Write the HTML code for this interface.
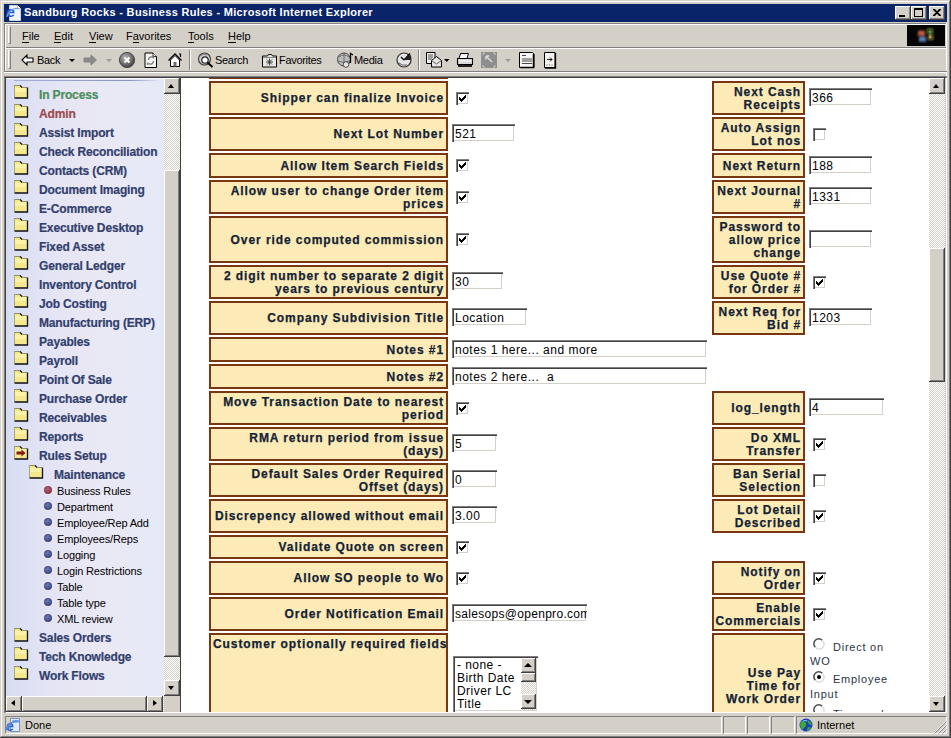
<!DOCTYPE html>
<html><head><meta charset="utf-8">
<style>
*{box-sizing:border-box}
html,body{margin:0;padding:0}
body{width:951px;height:738px;overflow:hidden;position:relative;background:#D4D0C8;font-family:"Liberation Sans",sans-serif;}
.a{position:absolute}
.btn{background:#D4D0C8;box-shadow:inset -1px -1px #404040,inset 1px 1px #fff,inset -2px -2px #808080,inset 2px 2px #D4D0C8}
.trk{background-color:#D4D0C8;background-image:repeating-conic-gradient(#fff 0 25%,#D4D0C8 0 50%);background-size:2px 2px}
.tri{width:0;height:0;position:absolute}
.menu{font-size:11px;line-height:13px;color:#000;top:30px;white-space:nowrap}
.menu u{text-decoration:none;border-bottom:1px solid #000}
.tb{font-size:11px;line-height:13px;color:#000;top:54px;letter-spacing:-0.3px;white-space:nowrap}
/* sidebar */
#side{left:6px;top:78px;width:158px;height:618px;overflow:hidden;background:linear-gradient(90deg,#d8ddf3 0%,#e1e3f5 22%,#e9e7f4 50%,#e9e9f6 75%,#e5e9f7 100%)}
.si{position:absolute;font-size:12px;line-height:13px;font-weight:bold;color:#323f6d;white-space:nowrap;letter-spacing:-0.15px;-webkit-text-stroke:0.2px}
.fold{position:absolute}
.sub{position:absolute;left:57px;font-size:11px;line-height:13px;color:#000;white-space:nowrap;letter-spacing:-0.15px}
.dot{position:absolute;left:44px;width:8px;height:8px;border-radius:50%;background:radial-gradient(circle at 45% 40%,#6c78b4,#3a4478 70%,rgba(90,100,170,0.5) 100%)}
.dot.red{background:radial-gradient(circle at 45% 40%,#b06070,#8a3444 70%,rgba(200,110,130,0.5) 100%)}
/* main */
#main{left:181px;top:78px;width:748px;height:634px;overflow:hidden;background:#fff}
.lb{position:absolute;background:#FDEBB7;border:2px solid #7A3610;font-size:12px;font-weight:bold;color:#132234;letter-spacing:0.92px;-webkit-text-stroke:0.25px #132234;text-align:right;line-height:13px;display:flex;align-items:center;justify-content:flex-end;padding-right:2px;padding-top:1px;white-space:nowrap}
.in{position:absolute;height:18px;background:#fff;box-shadow:inset 1px 1px #808080,inset 2px 2px #404040,inset -1px -1px #fff,inset -2px -2px #D4D0C8;font-size:12px;color:#000;padding-left:3px;padding-top:3px;line-height:15px;white-space:nowrap;overflow:hidden;letter-spacing:0.5px}
.cb{position:absolute;width:13px;height:13px;background:#fff;box-shadow:inset 1px 1px #808080,inset 2px 2px #404040,inset -1px -1px #fff,inset -2px -2px #D4D0C8}
.ck{position:absolute;left:3px;top:3px}
.sel{position:absolute;background:#fff;box-shadow:inset 1px 1px #808080,inset 2px 2px #404040,inset -1px -1px #fff,inset -2px -2px #D4D0C8}
.opts{position:absolute;left:4px;top:3px;font-size:12px;line-height:13px;letter-spacing:0.45px;color:#000;white-space:nowrap}
.rad{position:absolute;width:12px;height:12px}

.rt{position:absolute;font-size:11px;line-height:13px;color:#2b3444;letter-spacing:0.75px;white-space:nowrap}
</style></head><body>

<!-- window frame -->
<div class="a" style="left:0;top:0;width:951px;height:738px;box-shadow:inset -1px -1px #404040,inset 1px 1px #D4D0C8,inset -2px -2px #808080,inset 2px 2px #fff"></div>

<!-- title bar -->
<div class="a" style="left:4px;top:4px;width:943px;height:18px;background:#0A246A"></div>
<svg class="a" style="left:6px;top:5px" width="16" height="16" viewBox="0 0 16 16">
<path d="M3.5 0.5h8l3 3v12h-11z" fill="#f2f4fa" stroke="#c8d0e0" stroke-width="1"/>
<path d="M11.5 0.5v3h3" fill="#fff" stroke="#aab" stroke-width="0.8"/>
<text x="0.5" y="12" font-family="Liberation Sans" font-weight="bold" font-size="15" fill="#2558c8">e</text>
<path d="M0.5 12c2-6 8-10 12-8" stroke="#6a9af0" stroke-width="1.3" fill="none"/>
</svg>
<div class="a" style="left:24px;top:6px;font-size:11px;font-weight:bold;color:#fff;letter-spacing:0.32px;white-space:nowrap">Sandburg Rocks - Business Rules - Microsoft Internet Explorer</div>
<div class="a btn" style="left:895px;top:6px;width:16px;height:14px"><div class="a" style="left:4px;top:9px;width:6px;height:2px;background:#000"></div></div>
<div class="a btn" style="left:911px;top:6px;width:16px;height:14px"><div class="a" style="left:3px;top:2px;width:9px;height:9px;border:1px solid #000;border-top-width:2px"></div></div>
<div class="a btn" style="left:929px;top:6px;width:16px;height:14px"><svg class="a" style="left:4px;top:3px" width="8" height="7" viewBox="0 0 8 7"><path d="M0 0L7 7M7 0L0 7M1 0L8 7M8 0L1 7" stroke="#000" stroke-width="1.2"/></svg></div>

<!-- menu bar -->
<div class="a" style="left:4px;top:23px;width:943px;height:1px;background:#808080"></div>
<div class="a" style="left:4px;top:24px;width:943px;height:1px;background:#fff"></div>
<div class="a" style="left:4px;top:47px;width:943px;height:1px;background:#808080"></div>
<div class="a" style="left:4px;top:48px;width:943px;height:1px;background:#fff"></div>
<div class="a" style="left:4px;top:23px;width:1px;height:50px;background:#808080"></div>
<div class="a" style="left:5px;top:24px;width:1px;height:48px;background:#fff"></div>
<div class="a" style="left:946px;top:23px;width:1px;height:690px;background:#fff"></div>
<div class="a" style="left:4px;top:76px;width:943px;height:1px;background:#808080"></div>
<div class="a" style="left:4px;top:76px;width:1px;height:637px;background:#808080"></div>
<div class="a" style="left:8px;top:26px;width:3px;height:18px;border-left:1px solid #fff;border-top:1px solid #fff;border-right:1px solid #808080;border-bottom:1px solid #808080"></div>
<div class="a menu" style="left:22px"><u>F</u>ile</div>
<div class="a menu" style="left:54px"><u>E</u>dit</div>
<div class="a menu" style="left:89px"><u>V</u>iew</div>
<div class="a menu" style="left:126px">F<u>a</u>vorites</div>
<div class="a menu" style="left:188px"><u>T</u>ools</div>
<div class="a menu" style="left:228px"><u>H</u>elp</div>
<div class="a" style="left:907px;top:25px;width:38px;height:21px;background:#050505"></div>
<svg class="a" style="left:914px;top:26px" width="24" height="20" viewBox="0 0 24 20">
<defs><filter id="bl"><feGaussianBlur stdDeviation="0.9"/></filter></defs><g filter="url(#bl)">
<path d="M4 5q3-1.2 7 0v5q-4-1.2-7 0z" fill="#c06040"/><path d="M13 3q3-1 6 0v5q-3-1-6 0z" fill="#6a9a40"/>
<path d="M5 11q3-1.2 7 0v5q-4-1.2-7 0z" fill="#5a80b8"/><path d="M14 9q3-1 5 0v5q-2-1-5 0z" fill="#b8a850"/></g>
<path d="M14 4h4v9h-4z" fill="none" stroke="#101000" stroke-width="1" opacity="0.6"/>
</svg>

<!-- toolbar -->
<div class="a" style="left:4px;top:71px;width:943px;height:1px;background:#808080"></div>
<div class="a" style="left:4px;top:72px;width:943px;height:1px;background:#fff"></div>
<div class="a" style="left:8px;top:50px;width:3px;height:19px;border-left:1px solid #fff;border-top:1px solid #fff;border-right:1px solid #808080;border-bottom:1px solid #808080"></div>

<svg class="a" style="left:0;top:48px" width="600" height="24" viewBox="0 48 600 24">
<!-- back arrow outline -->
<path d="M22 60l5-5v3h6v4h-6v3z" fill="#fff" stroke="#000" stroke-width="1.1" stroke-linejoin="miter"/>
<!-- back dropdown -->
<path d="M69 59h6l-3 3z" fill="#000"/>
<!-- forward arrow gray -->
<path d="M84 58h7v-3l5.5 5-5.5 5v-3h-7z" fill="#8c8c8c" stroke="#7a7a7a" stroke-width="0.8"/>
<path d="M106 59h6l-3 3z" fill="#9a9a9a"/>
<!-- stop -->
<defs><radialGradient id="sg" cx="0.4" cy="0.35" r="0.7"><stop offset="0" stop-color="#b8b8b8"/><stop offset="0.6" stop-color="#6e6e6e"/><stop offset="1" stop-color="#3c3c3c"/></radialGradient></defs>
<circle cx="127" cy="60" r="7.6" fill="url(#sg)" stroke="#2e2e2e" stroke-width="0.8"/>
<path d="M124.5 57.5l5 5M129.5 57.5l-5 5" stroke="#fff" stroke-width="2"/>
<!-- refresh doc -->
<path d="M145 53h8l3.5 3.5v11h-11.5z" fill="#f4f4f0" stroke="#000" stroke-width="1"/><path d="M153 53v3.5h3.5" fill="#fff" stroke="#000" stroke-width="0.8"/>
<path d="M148.5 60a3 3 0 0 1 5-2.3M153.5 61a3 3 0 0 1-5 2.3" stroke="#7a7a7a" stroke-width="1.3" fill="none"/>
<path d="M152 56l2.5 0.5-0.8 2.5zM149 65l-2.5-0.5 0.8-2.5z" fill="#7a7a7a"/>
<!-- home -->
<path d="M168.5 60.5l6.5-6.5 6.5 6.5" stroke="#000" stroke-width="1.3" fill="none"/>
<path d="M170.5 60v6.5h9v-6.5l-4.5-4.5z" fill="#fff" stroke="#000" stroke-width="1"/>
<path d="M173.5 62h3v4.5h-3z" fill="#6a6a6a"/>
<path d="M179 54h1.5v3" stroke="#000" stroke-width="1.2" fill="none"/>
<!-- separator -->
<path d="M189.5 50v20" stroke="#808080"/><path d="M190.5 50v20" stroke="#fff"/>
<!-- search -->
<circle cx="204.5" cy="59" r="6" fill="#cfcfcf" stroke="#404040" stroke-width="1.2"/>
<circle cx="205" cy="60" r="3.2" fill="#fff" stroke="#202020" stroke-width="1.2"/>
<path d="M207.5 62.5l5 4.5" stroke="#000" stroke-width="2"/>
<path d="M200 56q3-3 7-1" stroke="#777" stroke-width="1" fill="none"/>
<!-- favorites folder -->
<path d="M262.5 56h5l1-1.5h3l1 1.5h4v11h-14z" fill="#e8e8e4" stroke="#000" stroke-width="1"/>
<path d="M263 57.5h13" stroke="#888"/>
<path d="M269.5 58.5v7M266 62h7M267 59.5l5 5M272 59.5l-5 5" stroke="#333" stroke-width="0.9"/>
<!-- media globe -->
<circle cx="344" cy="59.5" r="6.5" fill="#bdbdbd" stroke="#404040" stroke-width="1"/>
<path d="M339 57q5-4 10 0M338 61q6 3 12 0M344 53v13" stroke="#666" stroke-width="0.9" fill="none"/>
<circle cx="346" cy="64.5" r="2.8" fill="#e6e6e6" stroke="#333" stroke-width="0.8"/>
<path d="M350.5 63v-9.5l2.5 1.5" stroke="#000" stroke-width="1.3" fill="none"/>
<!-- history -->
<circle cx="404" cy="60" r="7" fill="#e6e6e6" stroke="#303030" stroke-width="1.2"/>
<path d="M404 60l6-6.5M404 60l-3-3" stroke="#000" stroke-width="1.4"/>
<path d="M404 60L410 54A7 7 0 0 1 411 60z" fill="#202020"/>
<path d="M399 63q3 3 8 2" stroke="#666" stroke-width="1" fill="none"/>
<!-- separator -->
<path d="M418.5 50v20" stroke="#808080"/><path d="M419.5 50v20" stroke="#fff"/>
<!-- mail -->
<path d="M426.5 52.5h8.5v11h-8.5z" fill="#f4f4f2" stroke="#000" stroke-width="1"/>
<path d="M428 55h5M428 57h5M428 59h4" stroke="#333" stroke-width="0.9"/>
<path d="M431.5 60.5l5-4 5 4v6.5h-10z" fill="#e8e8e6" stroke="#000" stroke-width="1"/>
<path d="M431.5 60.5l5 3.5 5-3.5" stroke="#555" fill="none" stroke-width="0.9"/>
<path d="M444 59h5.5l-2.75 3z" fill="#000"/>
<!-- print -->
<path d="M460.5 53.5h8l-1.5 5h-8z" fill="#fafafa" stroke="#000" stroke-width="1"/>
<path d="M457.5 58.5h15v6h-15z" fill="#d8d8d8" stroke="#000" stroke-width="1.1"/>
<path d="M458 65h14v2h-14z" fill="#222"/>
<path d="M459 61h12" stroke="#fff" stroke-width="1"/>
<!-- edit disabled gray box -->
<rect x="481" y="52" width="16" height="16" fill="#8e8e8e"/>
<path d="M486 56l6 6M486 56v3.5M486 56h3.5" stroke="#d8d8d8" stroke-width="1.6" fill="none"/>
<path d="M483 55v-2h2M495 55v-2h-2M483 65v2h2M495 65v2h-2" stroke="#c8c8c8" stroke-width="1" fill="none"/>
<path d="M505 59h6l-3 3z" fill="#9a9a9a"/>
<!-- discuss doc -->
<path d="M519.5 52.5h13l1.5 1.5v13.5h-14.5z" fill="#f6f6f4" stroke="#000" stroke-width="1"/>
<path d="M533.5 54v13.5h-13" stroke="#000" stroke-width="1.5" fill="none"/>
<path d="M522 55.5h4M522 59h10M522 61h10M522 63.5h10" stroke="#333" stroke-width="0.9"/>
<!-- messenger doc -->
<path d="M544.5 52.5h10.5v15h-10.5z" fill="#f2f2f0" stroke="#000" stroke-width="1"/>
<path d="M555.5 53v15h-10.5" stroke="#000" stroke-width="1.3" fill="none"/>
<path d="M547 59.5h5M550 57.5l2 2-2 2" stroke="#000" stroke-width="0.9" fill="none"/>
<path d="M546.5 65h1M549 65h1M551.5 65h1" stroke="#555"/>
</svg>
<div class="a tb" style="left:37px">Back</div>
<div class="a tb" style="left:215px">Search</div>
<div class="a tb" style="left:279px">Favorites</div>
<div class="a tb" style="left:354px">Media</div>

<!-- frames border -->
<div class="a" style="left:5px;top:77px;width:942px;height:636px;border-top:1px solid #404040;border-left:1px solid #404040;border-right:1px solid #fff;border-bottom:1px solid #fff"></div>

<!-- sidebar -->
<div class="a" id="side"></div>
<div class="a" style="left:0;top:0;width:164px;height:696px;overflow:hidden;clip-path:inset(78px 0 0 6px)">
<div class="a" style="left:6px;top:78px;width:158px;height:1px;background:#f4f6fc"></div>
<div class="a" style="left:14px;top:80px;width:143px;height:1px;background:linear-gradient(90deg,#a8b2d8,#8a93b8 80%,#d8dcf0)"></div>
<svg class="fold" style="left:13px;top:85px" width="16" height="14" viewBox="0 0 16 14"><path d="M1 0.5h6.5l2 2h5v10h-13.5z" fill="#F4E88C"/><path d="M2 3h11v4h-11z" fill="#FAF2A6"/><path d="M1 0.5h6.5" stroke="#8f8f6a" stroke-width="1"/><path d="M1.5 0.5v12" stroke="#a8a878" stroke-width="1"/><path d="M7 0.5l2 2h0.5" stroke="#111" stroke-width="1.2" fill="none"/><path d="M9 2.5h5" stroke="#8f8f6a" stroke-width="1"/><path d="M14.5 2.5v10.5h-13" stroke="#111" stroke-width="1.3" fill="none"/></svg>
<div class="si" style="left:39px;top:89px;color:#4b8d5b">In Process</div>
<svg class="fold" style="left:13px;top:104px" width="16" height="14" viewBox="0 0 16 14"><path d="M1 0.5h6.5l2 2h5v10h-13.5z" fill="#F4E88C"/><path d="M2 3h11v4h-11z" fill="#FAF2A6"/><path d="M1 0.5h6.5" stroke="#8f8f6a" stroke-width="1"/><path d="M1.5 0.5v12" stroke="#a8a878" stroke-width="1"/><path d="M7 0.5l2 2h0.5" stroke="#111" stroke-width="1.2" fill="none"/><path d="M9 2.5h5" stroke="#8f8f6a" stroke-width="1"/><path d="M14.5 2.5v10.5h-13" stroke="#111" stroke-width="1.3" fill="none"/></svg>
<div class="si" style="left:39px;top:108px;color:#9b4a4f">Admin</div>
<svg class="fold" style="left:13px;top:123px" width="16" height="14" viewBox="0 0 16 14"><path d="M1 0.5h6.5l2 2h5v10h-13.5z" fill="#F4E88C"/><path d="M2 3h11v4h-11z" fill="#FAF2A6"/><path d="M1 0.5h6.5" stroke="#8f8f6a" stroke-width="1"/><path d="M1.5 0.5v12" stroke="#a8a878" stroke-width="1"/><path d="M7 0.5l2 2h0.5" stroke="#111" stroke-width="1.2" fill="none"/><path d="M9 2.5h5" stroke="#8f8f6a" stroke-width="1"/><path d="M14.5 2.5v10.5h-13" stroke="#111" stroke-width="1.3" fill="none"/></svg>
<div class="si" style="left:39px;top:127px">Assist Import</div>
<svg class="fold" style="left:13px;top:142px" width="16" height="14" viewBox="0 0 16 14"><path d="M1 0.5h6.5l2 2h5v10h-13.5z" fill="#F4E88C"/><path d="M2 3h11v4h-11z" fill="#FAF2A6"/><path d="M1 0.5h6.5" stroke="#8f8f6a" stroke-width="1"/><path d="M1.5 0.5v12" stroke="#a8a878" stroke-width="1"/><path d="M7 0.5l2 2h0.5" stroke="#111" stroke-width="1.2" fill="none"/><path d="M9 2.5h5" stroke="#8f8f6a" stroke-width="1"/><path d="M14.5 2.5v10.5h-13" stroke="#111" stroke-width="1.3" fill="none"/></svg>
<div class="si" style="left:39px;top:146px">Check Reconciliation</div>
<svg class="fold" style="left:13px;top:161px" width="16" height="14" viewBox="0 0 16 14"><path d="M1 0.5h6.5l2 2h5v10h-13.5z" fill="#F4E88C"/><path d="M2 3h11v4h-11z" fill="#FAF2A6"/><path d="M1 0.5h6.5" stroke="#8f8f6a" stroke-width="1"/><path d="M1.5 0.5v12" stroke="#a8a878" stroke-width="1"/><path d="M7 0.5l2 2h0.5" stroke="#111" stroke-width="1.2" fill="none"/><path d="M9 2.5h5" stroke="#8f8f6a" stroke-width="1"/><path d="M14.5 2.5v10.5h-13" stroke="#111" stroke-width="1.3" fill="none"/></svg>
<div class="si" style="left:39px;top:165px">Contacts (CRM)</div>
<svg class="fold" style="left:13px;top:180px" width="16" height="14" viewBox="0 0 16 14"><path d="M1 0.5h6.5l2 2h5v10h-13.5z" fill="#F4E88C"/><path d="M2 3h11v4h-11z" fill="#FAF2A6"/><path d="M1 0.5h6.5" stroke="#8f8f6a" stroke-width="1"/><path d="M1.5 0.5v12" stroke="#a8a878" stroke-width="1"/><path d="M7 0.5l2 2h0.5" stroke="#111" stroke-width="1.2" fill="none"/><path d="M9 2.5h5" stroke="#8f8f6a" stroke-width="1"/><path d="M14.5 2.5v10.5h-13" stroke="#111" stroke-width="1.3" fill="none"/></svg>
<div class="si" style="left:39px;top:184px">Document Imaging</div>
<svg class="fold" style="left:13px;top:199px" width="16" height="14" viewBox="0 0 16 14"><path d="M1 0.5h6.5l2 2h5v10h-13.5z" fill="#F4E88C"/><path d="M2 3h11v4h-11z" fill="#FAF2A6"/><path d="M1 0.5h6.5" stroke="#8f8f6a" stroke-width="1"/><path d="M1.5 0.5v12" stroke="#a8a878" stroke-width="1"/><path d="M7 0.5l2 2h0.5" stroke="#111" stroke-width="1.2" fill="none"/><path d="M9 2.5h5" stroke="#8f8f6a" stroke-width="1"/><path d="M14.5 2.5v10.5h-13" stroke="#111" stroke-width="1.3" fill="none"/></svg>
<div class="si" style="left:39px;top:203px">E-Commerce</div>
<svg class="fold" style="left:13px;top:218px" width="16" height="14" viewBox="0 0 16 14"><path d="M1 0.5h6.5l2 2h5v10h-13.5z" fill="#F4E88C"/><path d="M2 3h11v4h-11z" fill="#FAF2A6"/><path d="M1 0.5h6.5" stroke="#8f8f6a" stroke-width="1"/><path d="M1.5 0.5v12" stroke="#a8a878" stroke-width="1"/><path d="M7 0.5l2 2h0.5" stroke="#111" stroke-width="1.2" fill="none"/><path d="M9 2.5h5" stroke="#8f8f6a" stroke-width="1"/><path d="M14.5 2.5v10.5h-13" stroke="#111" stroke-width="1.3" fill="none"/></svg>
<div class="si" style="left:39px;top:222px">Executive Desktop</div>
<svg class="fold" style="left:13px;top:237px" width="16" height="14" viewBox="0 0 16 14"><path d="M1 0.5h6.5l2 2h5v10h-13.5z" fill="#F4E88C"/><path d="M2 3h11v4h-11z" fill="#FAF2A6"/><path d="M1 0.5h6.5" stroke="#8f8f6a" stroke-width="1"/><path d="M1.5 0.5v12" stroke="#a8a878" stroke-width="1"/><path d="M7 0.5l2 2h0.5" stroke="#111" stroke-width="1.2" fill="none"/><path d="M9 2.5h5" stroke="#8f8f6a" stroke-width="1"/><path d="M14.5 2.5v10.5h-13" stroke="#111" stroke-width="1.3" fill="none"/></svg>
<div class="si" style="left:39px;top:241px">Fixed Asset</div>
<svg class="fold" style="left:13px;top:256px" width="16" height="14" viewBox="0 0 16 14"><path d="M1 0.5h6.5l2 2h5v10h-13.5z" fill="#F4E88C"/><path d="M2 3h11v4h-11z" fill="#FAF2A6"/><path d="M1 0.5h6.5" stroke="#8f8f6a" stroke-width="1"/><path d="M1.5 0.5v12" stroke="#a8a878" stroke-width="1"/><path d="M7 0.5l2 2h0.5" stroke="#111" stroke-width="1.2" fill="none"/><path d="M9 2.5h5" stroke="#8f8f6a" stroke-width="1"/><path d="M14.5 2.5v10.5h-13" stroke="#111" stroke-width="1.3" fill="none"/></svg>
<div class="si" style="left:39px;top:260px">General Ledger</div>
<svg class="fold" style="left:13px;top:275px" width="16" height="14" viewBox="0 0 16 14"><path d="M1 0.5h6.5l2 2h5v10h-13.5z" fill="#F4E88C"/><path d="M2 3h11v4h-11z" fill="#FAF2A6"/><path d="M1 0.5h6.5" stroke="#8f8f6a" stroke-width="1"/><path d="M1.5 0.5v12" stroke="#a8a878" stroke-width="1"/><path d="M7 0.5l2 2h0.5" stroke="#111" stroke-width="1.2" fill="none"/><path d="M9 2.5h5" stroke="#8f8f6a" stroke-width="1"/><path d="M14.5 2.5v10.5h-13" stroke="#111" stroke-width="1.3" fill="none"/></svg>
<div class="si" style="left:39px;top:279px">Inventory Control</div>
<svg class="fold" style="left:13px;top:294px" width="16" height="14" viewBox="0 0 16 14"><path d="M1 0.5h6.5l2 2h5v10h-13.5z" fill="#F4E88C"/><path d="M2 3h11v4h-11z" fill="#FAF2A6"/><path d="M1 0.5h6.5" stroke="#8f8f6a" stroke-width="1"/><path d="M1.5 0.5v12" stroke="#a8a878" stroke-width="1"/><path d="M7 0.5l2 2h0.5" stroke="#111" stroke-width="1.2" fill="none"/><path d="M9 2.5h5" stroke="#8f8f6a" stroke-width="1"/><path d="M14.5 2.5v10.5h-13" stroke="#111" stroke-width="1.3" fill="none"/></svg>
<div class="si" style="left:39px;top:298px">Job Costing</div>
<svg class="fold" style="left:13px;top:313px" width="16" height="14" viewBox="0 0 16 14"><path d="M1 0.5h6.5l2 2h5v10h-13.5z" fill="#F4E88C"/><path d="M2 3h11v4h-11z" fill="#FAF2A6"/><path d="M1 0.5h6.5" stroke="#8f8f6a" stroke-width="1"/><path d="M1.5 0.5v12" stroke="#a8a878" stroke-width="1"/><path d="M7 0.5l2 2h0.5" stroke="#111" stroke-width="1.2" fill="none"/><path d="M9 2.5h5" stroke="#8f8f6a" stroke-width="1"/><path d="M14.5 2.5v10.5h-13" stroke="#111" stroke-width="1.3" fill="none"/></svg>
<div class="si" style="left:39px;top:317px">Manufacturing (ERP)</div>
<svg class="fold" style="left:13px;top:332px" width="16" height="14" viewBox="0 0 16 14"><path d="M1 0.5h6.5l2 2h5v10h-13.5z" fill="#F4E88C"/><path d="M2 3h11v4h-11z" fill="#FAF2A6"/><path d="M1 0.5h6.5" stroke="#8f8f6a" stroke-width="1"/><path d="M1.5 0.5v12" stroke="#a8a878" stroke-width="1"/><path d="M7 0.5l2 2h0.5" stroke="#111" stroke-width="1.2" fill="none"/><path d="M9 2.5h5" stroke="#8f8f6a" stroke-width="1"/><path d="M14.5 2.5v10.5h-13" stroke="#111" stroke-width="1.3" fill="none"/></svg>
<div class="si" style="left:39px;top:336px">Payables</div>
<svg class="fold" style="left:13px;top:351px" width="16" height="14" viewBox="0 0 16 14"><path d="M1 0.5h6.5l2 2h5v10h-13.5z" fill="#F4E88C"/><path d="M2 3h11v4h-11z" fill="#FAF2A6"/><path d="M1 0.5h6.5" stroke="#8f8f6a" stroke-width="1"/><path d="M1.5 0.5v12" stroke="#a8a878" stroke-width="1"/><path d="M7 0.5l2 2h0.5" stroke="#111" stroke-width="1.2" fill="none"/><path d="M9 2.5h5" stroke="#8f8f6a" stroke-width="1"/><path d="M14.5 2.5v10.5h-13" stroke="#111" stroke-width="1.3" fill="none"/></svg>
<div class="si" style="left:39px;top:355px">Payroll</div>
<svg class="fold" style="left:13px;top:370px" width="16" height="14" viewBox="0 0 16 14"><path d="M1 0.5h6.5l2 2h5v10h-13.5z" fill="#F4E88C"/><path d="M2 3h11v4h-11z" fill="#FAF2A6"/><path d="M1 0.5h6.5" stroke="#8f8f6a" stroke-width="1"/><path d="M1.5 0.5v12" stroke="#a8a878" stroke-width="1"/><path d="M7 0.5l2 2h0.5" stroke="#111" stroke-width="1.2" fill="none"/><path d="M9 2.5h5" stroke="#8f8f6a" stroke-width="1"/><path d="M14.5 2.5v10.5h-13" stroke="#111" stroke-width="1.3" fill="none"/></svg>
<div class="si" style="left:39px;top:374px">Point Of Sale</div>
<svg class="fold" style="left:13px;top:389px" width="16" height="14" viewBox="0 0 16 14"><path d="M1 0.5h6.5l2 2h5v10h-13.5z" fill="#F4E88C"/><path d="M2 3h11v4h-11z" fill="#FAF2A6"/><path d="M1 0.5h6.5" stroke="#8f8f6a" stroke-width="1"/><path d="M1.5 0.5v12" stroke="#a8a878" stroke-width="1"/><path d="M7 0.5l2 2h0.5" stroke="#111" stroke-width="1.2" fill="none"/><path d="M9 2.5h5" stroke="#8f8f6a" stroke-width="1"/><path d="M14.5 2.5v10.5h-13" stroke="#111" stroke-width="1.3" fill="none"/></svg>
<div class="si" style="left:39px;top:393px">Purchase Order</div>
<svg class="fold" style="left:13px;top:408px" width="16" height="14" viewBox="0 0 16 14"><path d="M1 0.5h6.5l2 2h5v10h-13.5z" fill="#F4E88C"/><path d="M2 3h11v4h-11z" fill="#FAF2A6"/><path d="M1 0.5h6.5" stroke="#8f8f6a" stroke-width="1"/><path d="M1.5 0.5v12" stroke="#a8a878" stroke-width="1"/><path d="M7 0.5l2 2h0.5" stroke="#111" stroke-width="1.2" fill="none"/><path d="M9 2.5h5" stroke="#8f8f6a" stroke-width="1"/><path d="M14.5 2.5v10.5h-13" stroke="#111" stroke-width="1.3" fill="none"/></svg>
<div class="si" style="left:39px;top:412px">Receivables</div>
<svg class="fold" style="left:13px;top:427px" width="16" height="14" viewBox="0 0 16 14"><path d="M1 0.5h6.5l2 2h5v10h-13.5z" fill="#F4E88C"/><path d="M2 3h11v4h-11z" fill="#FAF2A6"/><path d="M1 0.5h6.5" stroke="#8f8f6a" stroke-width="1"/><path d="M1.5 0.5v12" stroke="#a8a878" stroke-width="1"/><path d="M7 0.5l2 2h0.5" stroke="#111" stroke-width="1.2" fill="none"/><path d="M9 2.5h5" stroke="#8f8f6a" stroke-width="1"/><path d="M14.5 2.5v10.5h-13" stroke="#111" stroke-width="1.3" fill="none"/></svg>
<div class="si" style="left:39px;top:431px">Reports</div>
<svg class="fold" style="left:13px;top:446px" width="16" height="14" viewBox="0 0 16 14"><path d="M1 0.5h6.5l2 2h5v10h-13.5z" fill="#F4E88C"/><path d="M2 3h11v4h-11z" fill="#FAF2A6"/><path d="M1 0.5h6.5" stroke="#8f8f6a" stroke-width="1"/><path d="M1.5 0.5v12" stroke="#a8a878" stroke-width="1"/><path d="M7 0.5l2 2h0.5" stroke="#111" stroke-width="1.2" fill="none"/><path d="M9 2.5h5" stroke="#8f8f6a" stroke-width="1"/><path d="M14.5 2.5v10.5h-13" stroke="#111" stroke-width="1.3" fill="none"/><path d="M3.5 5.5h5v-2l4 3.5-4 3.5v-2h-5z" fill="#8B1A10"/></svg>
<div class="si" style="left:39px;top:450px">Rules Setup</div>
<svg class="fold" style="left:28px;top:465px" width="16" height="14" viewBox="0 0 16 14"><path d="M1 0.5h6.5l2 2h5v10h-13.5z" fill="#F4E88C"/><path d="M2 3h11v4h-11z" fill="#FAF2A6"/><path d="M1 0.5h6.5" stroke="#8f8f6a" stroke-width="1"/><path d="M1.5 0.5v12" stroke="#a8a878" stroke-width="1"/><path d="M7 0.5l2 2h0.5" stroke="#111" stroke-width="1.2" fill="none"/><path d="M9 2.5h5" stroke="#8f8f6a" stroke-width="1"/><path d="M14.5 2.5v10.5h-13" stroke="#111" stroke-width="1.3" fill="none"/></svg>
<div class="si" style="left:54px;top:469px">Maintenance</div>
<div class="dot red" style="top:486px"></div>
<div class="sub" style="top:485px">Business Rules</div>
<div class="dot " style="top:502px"></div>
<div class="sub" style="top:501px">Department</div>
<div class="dot " style="top:518px"></div>
<div class="sub" style="top:517px">Employee/Rep Add</div>
<div class="dot " style="top:534px"></div>
<div class="sub" style="top:533px">Employees/Reps</div>
<div class="dot " style="top:550px"></div>
<div class="sub" style="top:549px">Logging</div>
<div class="dot " style="top:566px"></div>
<div class="sub" style="top:565px">Login Restrictions</div>
<div class="dot " style="top:582px"></div>
<div class="sub" style="top:581px">Table</div>
<div class="dot " style="top:598px"></div>
<div class="sub" style="top:597px">Table type</div>
<div class="dot " style="top:614px"></div>
<div class="sub" style="top:613px">XML review</div>
<svg class="fold" style="left:13px;top:628px" width="16" height="14" viewBox="0 0 16 14"><path d="M1 0.5h6.5l2 2h5v10h-13.5z" fill="#F4E88C"/><path d="M2 3h11v4h-11z" fill="#FAF2A6"/><path d="M1 0.5h6.5" stroke="#8f8f6a" stroke-width="1"/><path d="M1.5 0.5v12" stroke="#a8a878" stroke-width="1"/><path d="M7 0.5l2 2h0.5" stroke="#111" stroke-width="1.2" fill="none"/><path d="M9 2.5h5" stroke="#8f8f6a" stroke-width="1"/><path d="M14.5 2.5v10.5h-13" stroke="#111" stroke-width="1.3" fill="none"/></svg>
<div class="si" style="left:39px;top:632px">Sales Orders</div>
<svg class="fold" style="left:13px;top:647px" width="16" height="14" viewBox="0 0 16 14"><path d="M1 0.5h6.5l2 2h5v10h-13.5z" fill="#F4E88C"/><path d="M2 3h11v4h-11z" fill="#FAF2A6"/><path d="M1 0.5h6.5" stroke="#8f8f6a" stroke-width="1"/><path d="M1.5 0.5v12" stroke="#a8a878" stroke-width="1"/><path d="M7 0.5l2 2h0.5" stroke="#111" stroke-width="1.2" fill="none"/><path d="M9 2.5h5" stroke="#8f8f6a" stroke-width="1"/><path d="M14.5 2.5v10.5h-13" stroke="#111" stroke-width="1.3" fill="none"/></svg>
<div class="si" style="left:39px;top:651px">Tech Knowledge</div>
<svg class="fold" style="left:13px;top:666px" width="16" height="14" viewBox="0 0 16 14"><path d="M1 0.5h6.5l2 2h5v10h-13.5z" fill="#F4E88C"/><path d="M2 3h11v4h-11z" fill="#FAF2A6"/><path d="M1 0.5h6.5" stroke="#8f8f6a" stroke-width="1"/><path d="M1.5 0.5v12" stroke="#a8a878" stroke-width="1"/><path d="M7 0.5l2 2h0.5" stroke="#111" stroke-width="1.2" fill="none"/><path d="M9 2.5h5" stroke="#8f8f6a" stroke-width="1"/><path d="M14.5 2.5v10.5h-13" stroke="#111" stroke-width="1.3" fill="none"/></svg>
<div class="si" style="left:39px;top:670px">Work Flows</div>

</div>
<!-- left frame scrollbars -->
<div class="a trk" style="left:164px;top:78px;width:16px;height:618px"></div>
<div class="a btn" style="left:164px;top:78px;width:16px;height:16px"><div class="tri" style="left:4px;top:6px;border-left:3.5px solid transparent;border-right:3.5px solid transparent;border-bottom:4px solid #000"></div></div>
<div class="a btn" style="left:164px;top:170px;width:16px;height:487px"></div>
<div class="a btn" style="left:164px;top:680px;width:16px;height:16px"><div class="tri" style="left:4px;top:6px;border-left:3.5px solid transparent;border-right:3.5px solid transparent;border-top:4px solid #000"></div></div>
<div class="a trk" style="left:6px;top:696px;width:158px;height:16px"></div>
<div class="a btn" style="left:6px;top:696px;width:16px;height:16px"><div class="tri" style="left:5px;top:4px;border-top:3.5px solid transparent;border-bottom:3.5px solid transparent;border-right:4px solid #000"></div></div>
<div class="a btn" style="left:22px;top:696px;width:125px;height:16px"></div>
<div class="a btn" style="left:147px;top:696px;width:16px;height:16px"><div class="tri" style="left:6px;top:4px;border-top:3.5px solid transparent;border-bottom:3.5px solid transparent;border-left:4px solid #000"></div></div>
<div class="a" style="left:164px;top:696px;width:16px;height:16px;background:#D4D0C8"></div>
<div class="a" style="left:180px;top:78px;width:1px;height:634px;background:#404040"></div>

<!-- main frame -->
<div class="a" id="main"></div>
<div class="a" style="left:0;top:0;width:929px;height:712px;overflow:hidden;clip-path:inset(78px 0 0 181px)">
<div class="lb" style="left:209px;top:44px;width:239px;height:35px"></div>
<div class="lb" style="left:209px;top:81px;width:239px;height:34px"><span>Shipper can finalize Invoice</span></div>
<div class="cb" style="left:456px;top:92px"><svg class="ck" width="7" height="7" viewBox="0 0 7 7"><path d="M6 0h1v3h-1zM5 1h1v3h-1zM4 2h1v3h-1zM3 3h1v3h-1zM2 4h1v3h-1zM1 3h1v3h-1zM0 2h1v3h-1z" fill="#000"/></svg></div>
<div class="lb" style="left:712px;top:81px;width:93px;height:34px"><span>Next Cash<br>Receipts</span></div>
<div class="in" style="left:809px;top:88px;width:63px">366</div>
<div class="lb" style="left:209px;top:117px;width:239px;height:34px"><span>Next Lot Number</span></div>
<div class="in" style="left:452px;top:124px;width:63px">521</div>
<div class="lb" style="left:712px;top:117px;width:93px;height:34px"><span>Auto Assign<br>Lot nos</span></div>
<div class="cb" style="left:813px;top:128px"></div>
<div class="lb" style="left:209px;top:153px;width:239px;height:25px"><span>Allow Item Search Fields</span></div>
<div class="cb" style="left:456px;top:159px"><svg class="ck" width="7" height="7" viewBox="0 0 7 7"><path d="M6 0h1v3h-1zM5 1h1v3h-1zM4 2h1v3h-1zM3 3h1v3h-1zM2 4h1v3h-1zM1 3h1v3h-1zM0 2h1v3h-1z" fill="#000"/></svg></div>
<div class="lb" style="left:712px;top:153px;width:93px;height:25px"><span>Next Return</span></div>
<div class="in" style="left:809px;top:156px;width:63px">188</div>
<div class="lb" style="left:209px;top:180px;width:239px;height:34px"><span>Allow user to change Order item<br>prices</span></div>
<div class="cb" style="left:456px;top:191px"><svg class="ck" width="7" height="7" viewBox="0 0 7 7"><path d="M6 0h1v3h-1zM5 1h1v3h-1zM4 2h1v3h-1zM3 3h1v3h-1zM2 4h1v3h-1zM1 3h1v3h-1zM0 2h1v3h-1z" fill="#000"/></svg></div>
<div class="lb" style="left:712px;top:180px;width:93px;height:34px"><span>Next Journal<br>#</span></div>
<div class="in" style="left:809px;top:187px;width:63px">1331</div>
<div class="lb" style="left:209px;top:216px;width:239px;height:47px"><span>Over ride computed commission</span></div>
<div class="cb" style="left:456px;top:233px"><svg class="ck" width="7" height="7" viewBox="0 0 7 7"><path d="M6 0h1v3h-1zM5 1h1v3h-1zM4 2h1v3h-1zM3 3h1v3h-1zM2 4h1v3h-1zM1 3h1v3h-1zM0 2h1v3h-1z" fill="#000"/></svg></div>
<div class="lb" style="left:712px;top:216px;width:93px;height:47px"><span>Password to<br>allow price<br>change</span></div>
<div class="in" style="left:809px;top:230px;width:63px"></div>
<div class="lb" style="left:209px;top:265px;width:239px;height:34px"><span>2 digit number to separate 2 digit<br>years to previous century</span></div>
<div class="in" style="left:452px;top:272px;width:51px">30</div>
<div class="lb" style="left:712px;top:265px;width:93px;height:34px"><span>Use Quote #<br>for Order #</span></div>
<div class="cb" style="left:813px;top:276px"><svg class="ck" width="7" height="7" viewBox="0 0 7 7"><path d="M6 0h1v3h-1zM5 1h1v3h-1zM4 2h1v3h-1zM3 3h1v3h-1zM2 4h1v3h-1zM1 3h1v3h-1zM0 2h1v3h-1z" fill="#000"/></svg></div>
<div class="lb" style="left:209px;top:301px;width:239px;height:34px"><span>Company Subdivision Title</span></div>
<div class="in" style="left:452px;top:308px;width:75px">Location</div>
<div class="lb" style="left:712px;top:301px;width:93px;height:34px"><span>Next Req for<br>Bid #</span></div>
<div class="in" style="left:809px;top:308px;width:63px">1203</div>
<div class="lb" style="left:209px;top:337px;width:239px;height:25px"><span>Notes #1</span></div>
<div class="in" style="left:452px;top:340px;width:255px">notes 1 here... and more</div>
<div class="lb" style="left:209px;top:364px;width:239px;height:25px"><span>Notes #2</span></div>
<div class="in" style="left:452px;top:367px;width:255px">notes 2 here...&nbsp; a</div>
<div class="lb" style="left:209px;top:391px;width:239px;height:34px"><span>Move Transaction Date to nearest<br>period</span></div>
<div class="cb" style="left:456px;top:402px"><svg class="ck" width="7" height="7" viewBox="0 0 7 7"><path d="M6 0h1v3h-1zM5 1h1v3h-1zM4 2h1v3h-1zM3 3h1v3h-1zM2 4h1v3h-1zM1 3h1v3h-1zM0 2h1v3h-1z" fill="#000"/></svg></div>
<div class="lb" style="left:712px;top:391px;width:93px;height:34px"><span>log_length</span></div>
<div class="in" style="left:809px;top:398px;width:75px">4</div>
<div class="lb" style="left:209px;top:427px;width:239px;height:34px"><span>RMA return period from issue<br>(days)</span></div>
<div class="in" style="left:452px;top:434px;width:45px">5</div>
<div class="lb" style="left:712px;top:427px;width:93px;height:34px"><span>Do XML<br>Transfer</span></div>
<div class="cb" style="left:813px;top:438px"><svg class="ck" width="7" height="7" viewBox="0 0 7 7"><path d="M6 0h1v3h-1zM5 1h1v3h-1zM4 2h1v3h-1zM3 3h1v3h-1zM2 4h1v3h-1zM1 3h1v3h-1zM0 2h1v3h-1z" fill="#000"/></svg></div>
<div class="lb" style="left:209px;top:463px;width:239px;height:34px"><span>Default Sales Order Required<br>Offset (days)</span></div>
<div class="in" style="left:452px;top:470px;width:45px">0</div>
<div class="lb" style="left:712px;top:463px;width:93px;height:34px"><span>Ban Serial<br>Selection</span></div>
<div class="cb" style="left:813px;top:474px"></div>
<div class="lb" style="left:209px;top:499px;width:239px;height:34px"><span>Discrepency allowed without email</span></div>
<div class="in" style="left:452px;top:506px;width:45px">3.00</div>
<div class="lb" style="left:712px;top:499px;width:93px;height:34px"><span>Lot Detail<br>Described</span></div>
<div class="cb" style="left:813px;top:510px"><svg class="ck" width="7" height="7" viewBox="0 0 7 7"><path d="M6 0h1v3h-1zM5 1h1v3h-1zM4 2h1v3h-1zM3 3h1v3h-1zM2 4h1v3h-1zM1 3h1v3h-1zM0 2h1v3h-1z" fill="#000"/></svg></div>
<div class="lb" style="left:209px;top:535px;width:239px;height:24px"><span>Validate Quote on screen</span></div>
<div class="cb" style="left:456px;top:541px"><svg class="ck" width="7" height="7" viewBox="0 0 7 7"><path d="M6 0h1v3h-1zM5 1h1v3h-1zM4 2h1v3h-1zM3 3h1v3h-1zM2 4h1v3h-1zM1 3h1v3h-1zM0 2h1v3h-1z" fill="#000"/></svg></div>
<div class="lb" style="left:209px;top:561px;width:239px;height:34px"><span>Allow SO people to Wo</span></div>
<div class="cb" style="left:456px;top:572px"><svg class="ck" width="7" height="7" viewBox="0 0 7 7"><path d="M6 0h1v3h-1zM5 1h1v3h-1zM4 2h1v3h-1zM3 3h1v3h-1zM2 4h1v3h-1zM1 3h1v3h-1zM0 2h1v3h-1z" fill="#000"/></svg></div>
<div class="lb" style="left:712px;top:561px;width:93px;height:34px"><span>Notify on<br>Order</span></div>
<div class="cb" style="left:813px;top:572px"><svg class="ck" width="7" height="7" viewBox="0 0 7 7"><path d="M6 0h1v3h-1zM5 1h1v3h-1zM4 2h1v3h-1zM3 3h1v3h-1zM2 4h1v3h-1zM1 3h1v3h-1zM0 2h1v3h-1z" fill="#000"/></svg></div>
<div class="lb" style="left:209px;top:597px;width:239px;height:34px"><span>Order Notification Email</span></div>
<div class="in" style="left:452px;top:604px;width:135px"><span style="letter-spacing:0.3px">salesops@openpro.com</span></div>
<div class="lb" style="left:712px;top:597px;width:93px;height:34px"><span>Enable<br>Commercials</span></div>
<div class="cb" style="left:813px;top:608px"><svg class="ck" width="7" height="7" viewBox="0 0 7 7"><path d="M6 0h1v3h-1zM5 1h1v3h-1zM4 2h1v3h-1zM3 3h1v3h-1zM2 4h1v3h-1zM1 3h1v3h-1zM0 2h1v3h-1z" fill="#000"/></svg></div>
<div class="lb" style="left:209px;top:633px;width:239px;height:105px;align-items:flex-start;justify-content:flex-start;padding:3px 0 0 2px;text-align:left"><span>Customer optionally required fields</span></div>
<div class="sel" style="left:453px;top:656px;width:85px;height:56px"><div class="opts">- none -<br>Birth Date<br>Driver LC<br>Title</div><div class="trk" style="position:absolute;left:68px;top:2px;width:15px;height:52px"></div><div class="btn" style="position:absolute;left:68px;top:2px;width:15px;height:15px"><div class="tri" style="left:3px;top:5px;border-left:4px solid transparent;border-right:4px solid transparent;border-bottom:4px solid #000"></div></div><div class="btn" style="position:absolute;left:68px;top:17px;width:15px;height:9px"></div><div class="btn" style="position:absolute;left:68px;top:38px;width:15px;height:15px"><div class="tri" style="left:3px;top:6px;border-left:4px solid transparent;border-right:4px solid transparent;border-top:4px solid #000"></div></div></div>
<div class="lb" style="left:712px;top:633px;width:93px;height:105px"><span>Use Pay<br>Time for<br>Work Order</span></div>
<div class="rad" style="left:813px;top:638px"><svg style="display:block" width="12" height="12" viewBox="0 0 12 12"><circle cx="6" cy="6" r="5" fill="#fff"/><path d="M2.3 9.2A4.8 4.8 0 0 1 9.2 2.3" stroke="#4a4a4a" stroke-width="1.5" fill="none"/><path d="M9.7 2.8A4.8 4.8 0 0 1 2.8 9.7" stroke="#d6d4ce" stroke-width="1.2" fill="none"/></svg></div><div class="rt" style="left:833px;top:641px">Direct on</div><div class="rt" style="left:810px;top:655px">WO</div>
<div class="rad" style="left:813px;top:671px"><svg style="display:block" width="12" height="12" viewBox="0 0 12 12"><circle cx="6" cy="6" r="5" fill="#fff"/><path d="M2.3 9.2A4.8 4.8 0 0 1 9.2 2.3" stroke="#4a4a4a" stroke-width="1.5" fill="none"/><path d="M9.7 2.8A4.8 4.8 0 0 1 2.8 9.7" stroke="#d6d4ce" stroke-width="1.2" fill="none"/><circle cx="6" cy="6" r="2" fill="#000"/></svg></div><div class="rt" style="left:833px;top:673px">Employee</div><div class="rt" style="left:810px;top:688px">Input</div>
<div class="rad" style="left:813px;top:704px"><svg style="display:block" width="12" height="12" viewBox="0 0 12 12"><circle cx="6" cy="6" r="5" fill="#fff"/><path d="M2.3 9.2A4.8 4.8 0 0 1 9.2 2.3" stroke="#4a4a4a" stroke-width="1.5" fill="none"/><path d="M9.7 2.8A4.8 4.8 0 0 1 2.8 9.7" stroke="#d6d4ce" stroke-width="1.2" fill="none"/></svg></div><div class="rt" style="left:833px;top:708px">Timecard</div>

</div>
<div class="a trk" style="left:929px;top:78px;width:16px;height:634px"></div>
<div class="a btn" style="left:929px;top:78px;width:16px;height:16px"><div class="tri" style="left:4px;top:6px;border-left:3.5px solid transparent;border-right:3.5px solid transparent;border-bottom:4px solid #000"></div></div>
<div class="a btn" style="left:929px;top:248px;width:16px;height:134px"></div>
<div class="a btn" style="left:929px;top:696px;width:16px;height:16px"><div class="tri" style="left:4px;top:6px;border-left:3.5px solid transparent;border-right:3.5px solid transparent;border-top:4px solid #000"></div></div>

<!-- status bar -->
<div class="a" style="left:5px;top:716px;width:717px;height:18px;border-right:1px solid #fff;border-bottom:1px solid #fff;border-left:1px solid #808080;border-top:1px solid #808080"></div>
<div class="a" style="left:25px;top:719px;font-size:11px">Done</div>
<div class="a" style="left:723px;top:716px;width:23px;height:18px;border-right:1px solid #fff;border-bottom:1px solid #fff;border-left:1px solid #808080;border-top:1px solid #808080"></div>
<div class="a" style="left:747px;top:716px;width:23px;height:18px;border-right:1px solid #fff;border-bottom:1px solid #fff;border-left:1px solid #808080;border-top:1px solid #808080"></div>
<div class="a" style="left:771px;top:716px;width:24px;height:18px;border-right:1px solid #fff;border-bottom:1px solid #fff;border-left:1px solid #808080;border-top:1px solid #808080"></div>
<div class="a" style="left:796px;top:716px;width:151px;height:18px;border-right:1px solid #fff;border-bottom:1px solid #fff;border-left:1px solid #808080;border-top:1px solid #808080"></div>
<div class="a" style="left:817px;top:719px;font-size:11px">Internet</div>
<svg class="a" style="left:5px;top:717px" width="17" height="16" viewBox="0 0 17 16">
<path d="M5.5 1.5h9v13h-9z" fill="#e2e8f6" stroke="#7088b8" stroke-width="0.9"/>
<path d="M7 3.5h6M7 5.5h6" stroke="#8fa4d0" stroke-width="0.8"/>
<text x="1" y="14" font-family="Liberation Sans" font-weight="bold" font-size="14" fill="#2a62d0">e</text>
<path d="M0.8 13.5c2-7 9-11 13.5-9" stroke="#4f8be8" stroke-width="1.5" fill="none"/>
</svg>
<svg class="a" style="left:799px;top:718px" width="14" height="14" viewBox="0 0 14 14">
<circle cx="7" cy="7" r="6.5" fill="#1b3fb8"/>
<path d="M3 3q3 0 4 2t-1 4q-2 1-2 3q-3-2-3-5q0-3 2-4zM8 2q4 1 5 5q-2 0-3-1t-2-4zM9 9q3 0 3 1q-1 2-4 3q0-2 1-4z" fill="#3fa73a"/>
<path d="M4 3q2-1 4 0" stroke="#9fe" stroke-width="0.8" fill="none"/>
</svg>
<svg class="a" style="left:933px;top:720px" width="14" height="14" viewBox="0 0 14 14">
<path d="M12.5 1.5l-11 11M12.5 5.5l-7 7M12.5 9.5l-3 3" stroke="#fff" stroke-width="1"/>
<path d="M13.5 1.5l-12 12M13.5 5.5l-8 8M13.5 9.5l-4 4" stroke="#808080" stroke-width="1"/>
</svg>


</body></html>
